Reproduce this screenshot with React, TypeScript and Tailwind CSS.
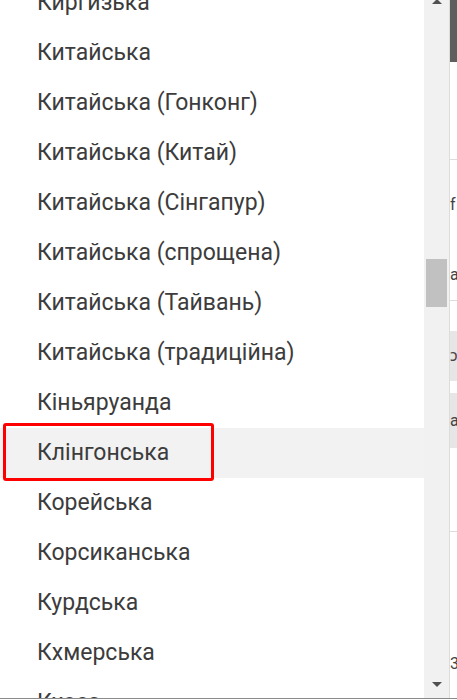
import { type FC } from "react";

const languages = [
  "Киргизька",
  "Китайська",
  "Китайська (Гонконг)",
  "Китайська (Китай)",
  "Китайська (Сінгапур)",
  "Китайська (спрощена)",
  "Китайська (Тайвань)",
  "Китайська (традиційна)",
  "Кіньяруанда",
  "Клінгонська",
  "Корейська",
  "Корсиканська",
  "Курдська",
  "Кхмерська",
  "Кхоса",
];

const ACTIVE = "Клінгонська";

const LanguageRow: FC<{ name: string }> = ({ name }) => {
  const active = name === ACTIVE;
  return (
    <li
      className={`relative flex h-[50px] shrink-0 items-center pl-[37px] text-[23px] text-[#3c3c3c] ${
        active ? "bg-[#f2f2f2]" : ""
      }`}
    >
      {name}
      {active && (
        <span className="pointer-events-none absolute left-[3px] top-[-5px] h-[58px] w-[211px] rounded-[3px] border-[3px] border-[#ff0000]" />
      )}
    </li>
  );
};

const Scrollbar: FC = () => {
  return (
    <div className="relative flex w-[25px] shrink-0 flex-col bg-[#f1f1f1]">
      {/* up arrow, partly above the page */}
      <div className="flex h-[5px] justify-center">
        <div className="mt-[-1px] h-0 w-0 border-x-[5px] border-b-[5px] border-x-transparent border-b-[#505050]" />
      </div>
      <div className="h-[254px]" />
      <div className="mx-[2px] h-[48px] bg-[#c1c1c1]" />
      <div className="flex-1" />
      <div className="flex h-[5px] justify-center">
        <div className="h-0 w-0 border-x-[5px] border-t-[5px] border-x-transparent border-t-[#505050]" />
      </div>
      <div className="h-[11px]" />
    </div>
  );
};

const BackgroundStrip: FC = () => {
  return (
    <div className="flex w-[8px] shrink-0 flex-col overflow-hidden border-l border-[#dcdcdc] text-[16px] leading-none text-[#444]">
      <div className="h-[62px] bg-[#5e5e5e]" />
      <div className="h-[97px]" />
      <div className="h-px bg-[#dcdcdc]" />
      <div className="flex h-[90px] items-center">f</div>
      <div className="flex h-[50px] items-center">a</div>
      <div className="h-px bg-[#dcdcdc]" />
      <div className="h-[30px]" />
      <div className="flex h-[50px] items-center bg-[#e6e6e6]">ɔ</div>
      <div className="h-[12px]" />
      <div className="flex h-[55px] items-center bg-[#e6e6e6]">a</div>
      <div className="h-[83px]" />
      <div className="h-px bg-[#dcdcdc]" />
      <div className="h-[122px]" />
      <div className="flex h-[20px] items-center">3</div>
      <div className="flex-1" />
    </div>
  );
};

export default function App() {
  return (
    <div
      className="flex h-[700px] w-[457px] flex-col overflow-hidden bg-white"
      style={{ fontFamily: "Roboto, 'Noto Sans', sans-serif" }}
    >
      <div className="flex h-[698px] shrink-0 overflow-hidden">
        <ul className="mt-[-22px] flex w-[424px] shrink-0 flex-col overflow-hidden">
          {languages.map((name) => (
            <LanguageRow key={name} name={name} />
          ))}
        </ul>
        <Scrollbar />
        <BackgroundStrip />
      </div>
      <div className="h-px bg-[#8a8a8a]" />
      <div className="flex-1 bg-white" />
    </div>
  );
}
